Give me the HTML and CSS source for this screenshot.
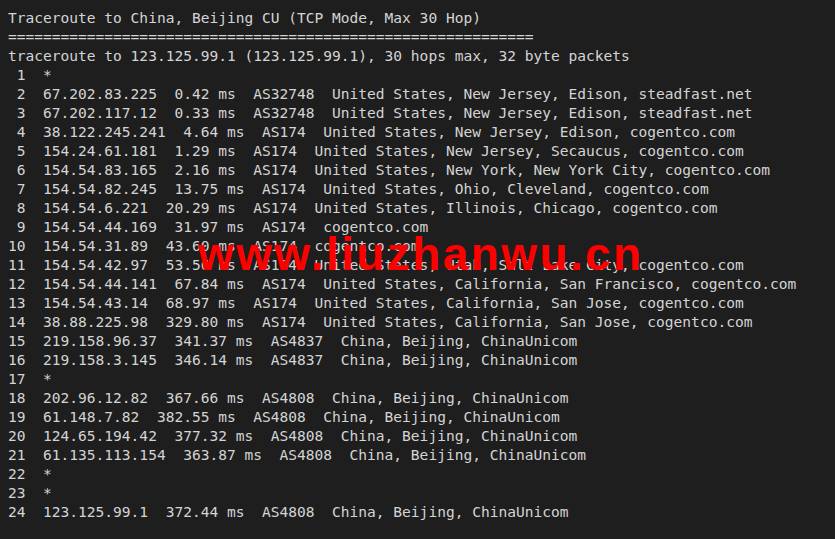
FILE: index.html
```html
<!DOCTYPE html>
<html>
<head>
<meta charset="utf-8">
<link rel="stylesheet" href="styles.css">
</head>
<body>
<pre class="term">Traceroute to China, Beijing CU (TCP Mode, Max 30 Hop)
============================================================
traceroute to 123.125.99.1 (123.125.99.1), 30 hops max, 32 byte packets
 1  *
 2  67.202.83.225  0.42 ms  AS32748  United States, New Jersey, Edison, steadfast.net
 3  67.202.117.12  0.33 ms  AS32748  United States, New Jersey, Edison, steadfast.net
 4  38.122.245.241  4.64 ms  AS174  United States, New Jersey, Edison, cogentco.com
 5  154.24.61.181  1.29 ms  AS174  United States, New Jersey, Secaucus, cogentco.com
 6  154.54.83.165  2.16 ms  AS174  United States, New York, New York City, cogentco.com
 7  154.54.82.245  13.75 ms  AS174  United States, Ohio, Cleveland, cogentco.com
 8  154.54.6.221  20.29 ms  AS174  United States, Illinois, Chicago, cogentco.com
 9  154.54.44.169  31.97 ms  AS174  cogentco.com
10  154.54.31.89  43.60 ms  AS174  cogentco.com
11  154.54.42.97  53.56 ms  AS174  United States, Utah, Salt Lake City, cogentco.com
12  154.54.44.141  67.84 ms  AS174  United States, California, San Francisco, cogentco.com
13  154.54.43.14  68.97 ms  AS174  United States, California, San Jose, cogentco.com
14  38.88.225.98  329.80 ms  AS174  United States, California, San Jose, cogentco.com
15  219.158.96.37  341.37 ms  AS4837  China, Beijing, ChinaUnicom
16  219.158.3.145  346.14 ms  AS4837  China, Beijing, ChinaUnicom
17  *
18  202.96.12.82  367.66 ms  AS4808  China, Beijing, ChinaUnicom
19  61.148.7.82  382.55 ms  AS4808  China, Beijing, ChinaUnicom
20  124.65.194.42  377.32 ms  AS4808  China, Beijing, ChinaUnicom
21  61.135.113.154  363.87 ms  AS4808  China, Beijing, ChinaUnicom
22  *
23  *
24  123.125.99.1  372.44 ms  AS4808  China, Beijing, ChinaUnicom</pre>
<div class="watermark">www.liuzhanwu.cn</div>
</body>
</html>
```
FILE: styles.css
```css
html, body {
  margin: 0;
  padding: 0;
  background: #1e1e1e;
  width: 835px;
  height: 539px;
  overflow: hidden;
}
body {
  position: relative;
}
.term {
  margin: 0;
  padding: 8px 0 0 8px;
  font-family: "DejaVu Sans Mono", "Liberation Mono", monospace;
  font-size: 14.55px;
  line-height: 19px;
  color: #d4d4d4;
  white-space: pre;
}
.watermark {
  position: absolute;
  left: 198px;
  top: 226px;
  font-family: "Liberation Sans", Arial, sans-serif;
  font-weight: bold;
  font-size: 46px;
  line-height: 56px;
  letter-spacing: 2.4px;
  color: #ff0000;
  white-space: nowrap;
}
```
